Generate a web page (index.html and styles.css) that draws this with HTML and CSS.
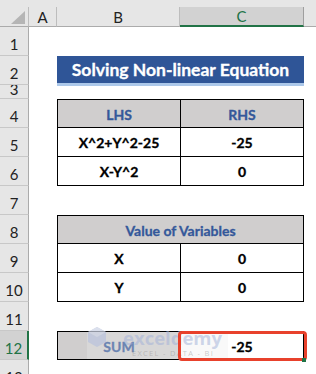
FILE: index.html
```html
<!DOCTYPE html>
<html>
<head>
<meta charset="utf-8">
<link rel="stylesheet" href="styles.css">
</head>
<body>
<div class="sheet">
  <div class="topstrip"></div>
  <div class="colhdr">
    <div class="corner"><svg class="tri" width="14" height="13" viewBox="0 0 14 13"><polygon points="14,0 14,13 0,13" fill="#B5B5B5"/></svg></div>
    <div class="ch">A</div>
    <div class="ch">B</div>
    <div class="ch sel">C</div>
    <div class="ch end"></div>
  </div>
  <div class="grid">
    <div class="rh">1</div><div></div><div></div><div></div><div></div>
    <div class="rh">2</div><div></div><div class="title">Solving Non-linear Equation</div><div></div>
    <div class="rh short">3</div><div></div><div></div><div></div><div></div>
    <div class="rh">4</div><div></div><div class="c hd top">LHS</div><div class="c hd top last">RHS</div><div></div>
    <div class="rh">5</div><div></div><div class="c">X^2+Y^2-25</div><div class="c last">-25</div><div></div>
    <div class="rh">6</div><div></div><div class="c">X-Y^2</div><div class="c last">0</div><div></div>
    <div class="rh">7</div><div></div><div></div><div></div><div></div>
    <div class="rh">8</div><div></div><div class="c hd top last merged">Value of Variables</div><div></div>
    <div class="rh">9</div><div></div><div class="c">X</div><div class="c last">0</div><div></div>
    <div class="rh">10</div><div></div><div class="c">Y</div><div class="c last">0</div><div></div>
    <div class="rh">11</div><div></div><div></div><div></div><div></div>
    <div class="rh rsel">12</div><div></div><div class="c hd top">SUM</div><div class="c top last">-25</div><div></div>
    <div class="rh">13</div><div></div><div></div><div></div><div></div>
  </div>
  <div class="wm">
    <svg class="wm-logo" width="20" height="20" viewBox="0 0 20 20"><polygon points="10,0 19,5 19,15 10,20 1,15 1,5" fill="#B9C3DD"/><polygon points="10,0 19,5 10,10 1,5" fill="#CDD4E6"/></svg>
    <div class="wm-text">
      <span class="wm-big">exceldemy</span>
      <span class="wm-small">EXCEL - DATA - BI</span>
    </div>
  </div>
  <div class="hl"></div>
  <div class="handle"></div>
</div>
</body>
</html>
```
FILE: styles.css
```css
* { box-sizing: border-box; }
html, body { margin: 0; padding: 0; background: #fff; }
.sheet {
  position: relative;
  width: 316px;
  height: 374px;
  overflow: hidden;
  font-family: "Lato", "Open Sans", sans-serif;
}
.topstrip { height: 7px; background: #E6E6E6; }
.colhdr {
  display: grid;
  grid-template-columns: 29px 28px 123px 124px 12px;
  height: 20px;
  background: #E6E6E6;
}
.corner {
  border-right: 1px solid #BDBDBD;
  border-bottom: 1px solid #ABABAB;
  display: flex;
  align-items: flex-end;
  justify-content: flex-end;
  padding: 0 3px 2px 0;
}
.ch {
  border-right: 1px solid #BDBDBD;
  border-bottom: 1px solid #ABABAB;
  display: flex;
  align-items: center;
  justify-content: center;
  font-size: 15px;
  color: #222;
}
.ch.sel {
  background: #D2D2D2;
  color: #217346;
  border-bottom: 2px solid #217346;
  border-right-color: #9F9F9F;
}
.ch.end { border-right: none; }
.grid {
  display: grid;
  grid-template-columns: 29px 28px 123px 124px 12px;
  grid-template-rows: 29px 29px 14px repeat(10, 29px);
}
.rh {
  background: #E6E6E6;
  border-right: 1px solid #ABABAB;
  border-bottom: 1px solid #C8C8C8;
  display: flex;
  align-items: flex-end;
  justify-content: center;
  font-size: 15px;
  line-height: 15px;
  padding-bottom: 3px;
  color: #222;
  overflow: hidden;
}
.rh.short { padding-bottom: 1px; }
.rh.rsel {
  background: #D2D2D2;
  color: #217346;
  border-right: 2px solid #217346;
}
.title {
  grid-column: span 2;
  background: #2F5597;
  color: #fff;
  font-weight: 700;
  font-size: 17.5px;
  display: flex;
  align-items: center;
  justify-content: center;
  border-bottom: 2px solid #ACC8EA;
  box-shadow: 0 1px 0 #ACC8EA;
  -webkit-text-stroke: 0.3px #fff;
}
.c {
  border-left: 1px solid #000;
  border-bottom: 1px solid #000;
  display: flex;
  align-items: center;
  justify-content: center;
  font-weight: 700;
  font-size: 14px;
  color: #000;
  padding-top: 1px;
  -webkit-text-stroke: 0.3px currentColor;
}
.c.top { border-top: 1px solid #000; }
.c.last { border-right: 1px solid #000; }
.c.hd { background: #D0CECE; color: #34589A; }
.c.merged { grid-column: span 2; }
.wm {
  position: absolute;
  left: 87px;
  top: 332px;
  width: 141px;
  height: 27px;
  background: rgba(236, 236, 236, 0.3);
}
.wm-logo {
  position: absolute;
  left: 0;
  top: -5px;
  opacity: 0.7;
}
.wm-text {
  position: absolute;
  left: 36px;
  top: -4px;
  display: flex;
  flex-direction: column;
  align-items: flex-start;
}
.wm-big {
  font-family: "Open Sans", sans-serif;
  font-weight: 700;
  font-size: 18.5px;
  line-height: 20px;
  color: rgba(160, 175, 215, 0.5);
}
.wm-small {
  font-family: "Open Sans", sans-serif;
  font-size: 7.5px;
  line-height: 8px;
  letter-spacing: 1.3px;
  color: rgba(140, 140, 140, 0.45);
  margin: 1px 0 0 9px;
}
.hl {
  position: absolute;
  left: 178px;
  top: 331px;
  width: 129px;
  height: 30px;
  border: 3px solid #E8412C;
  border-radius: 4px;
}
.handle {
  position: absolute;
  left: 302px;
  top: 358px;
  width: 4px;
  height: 4px;
  background: #217346;
}
```
